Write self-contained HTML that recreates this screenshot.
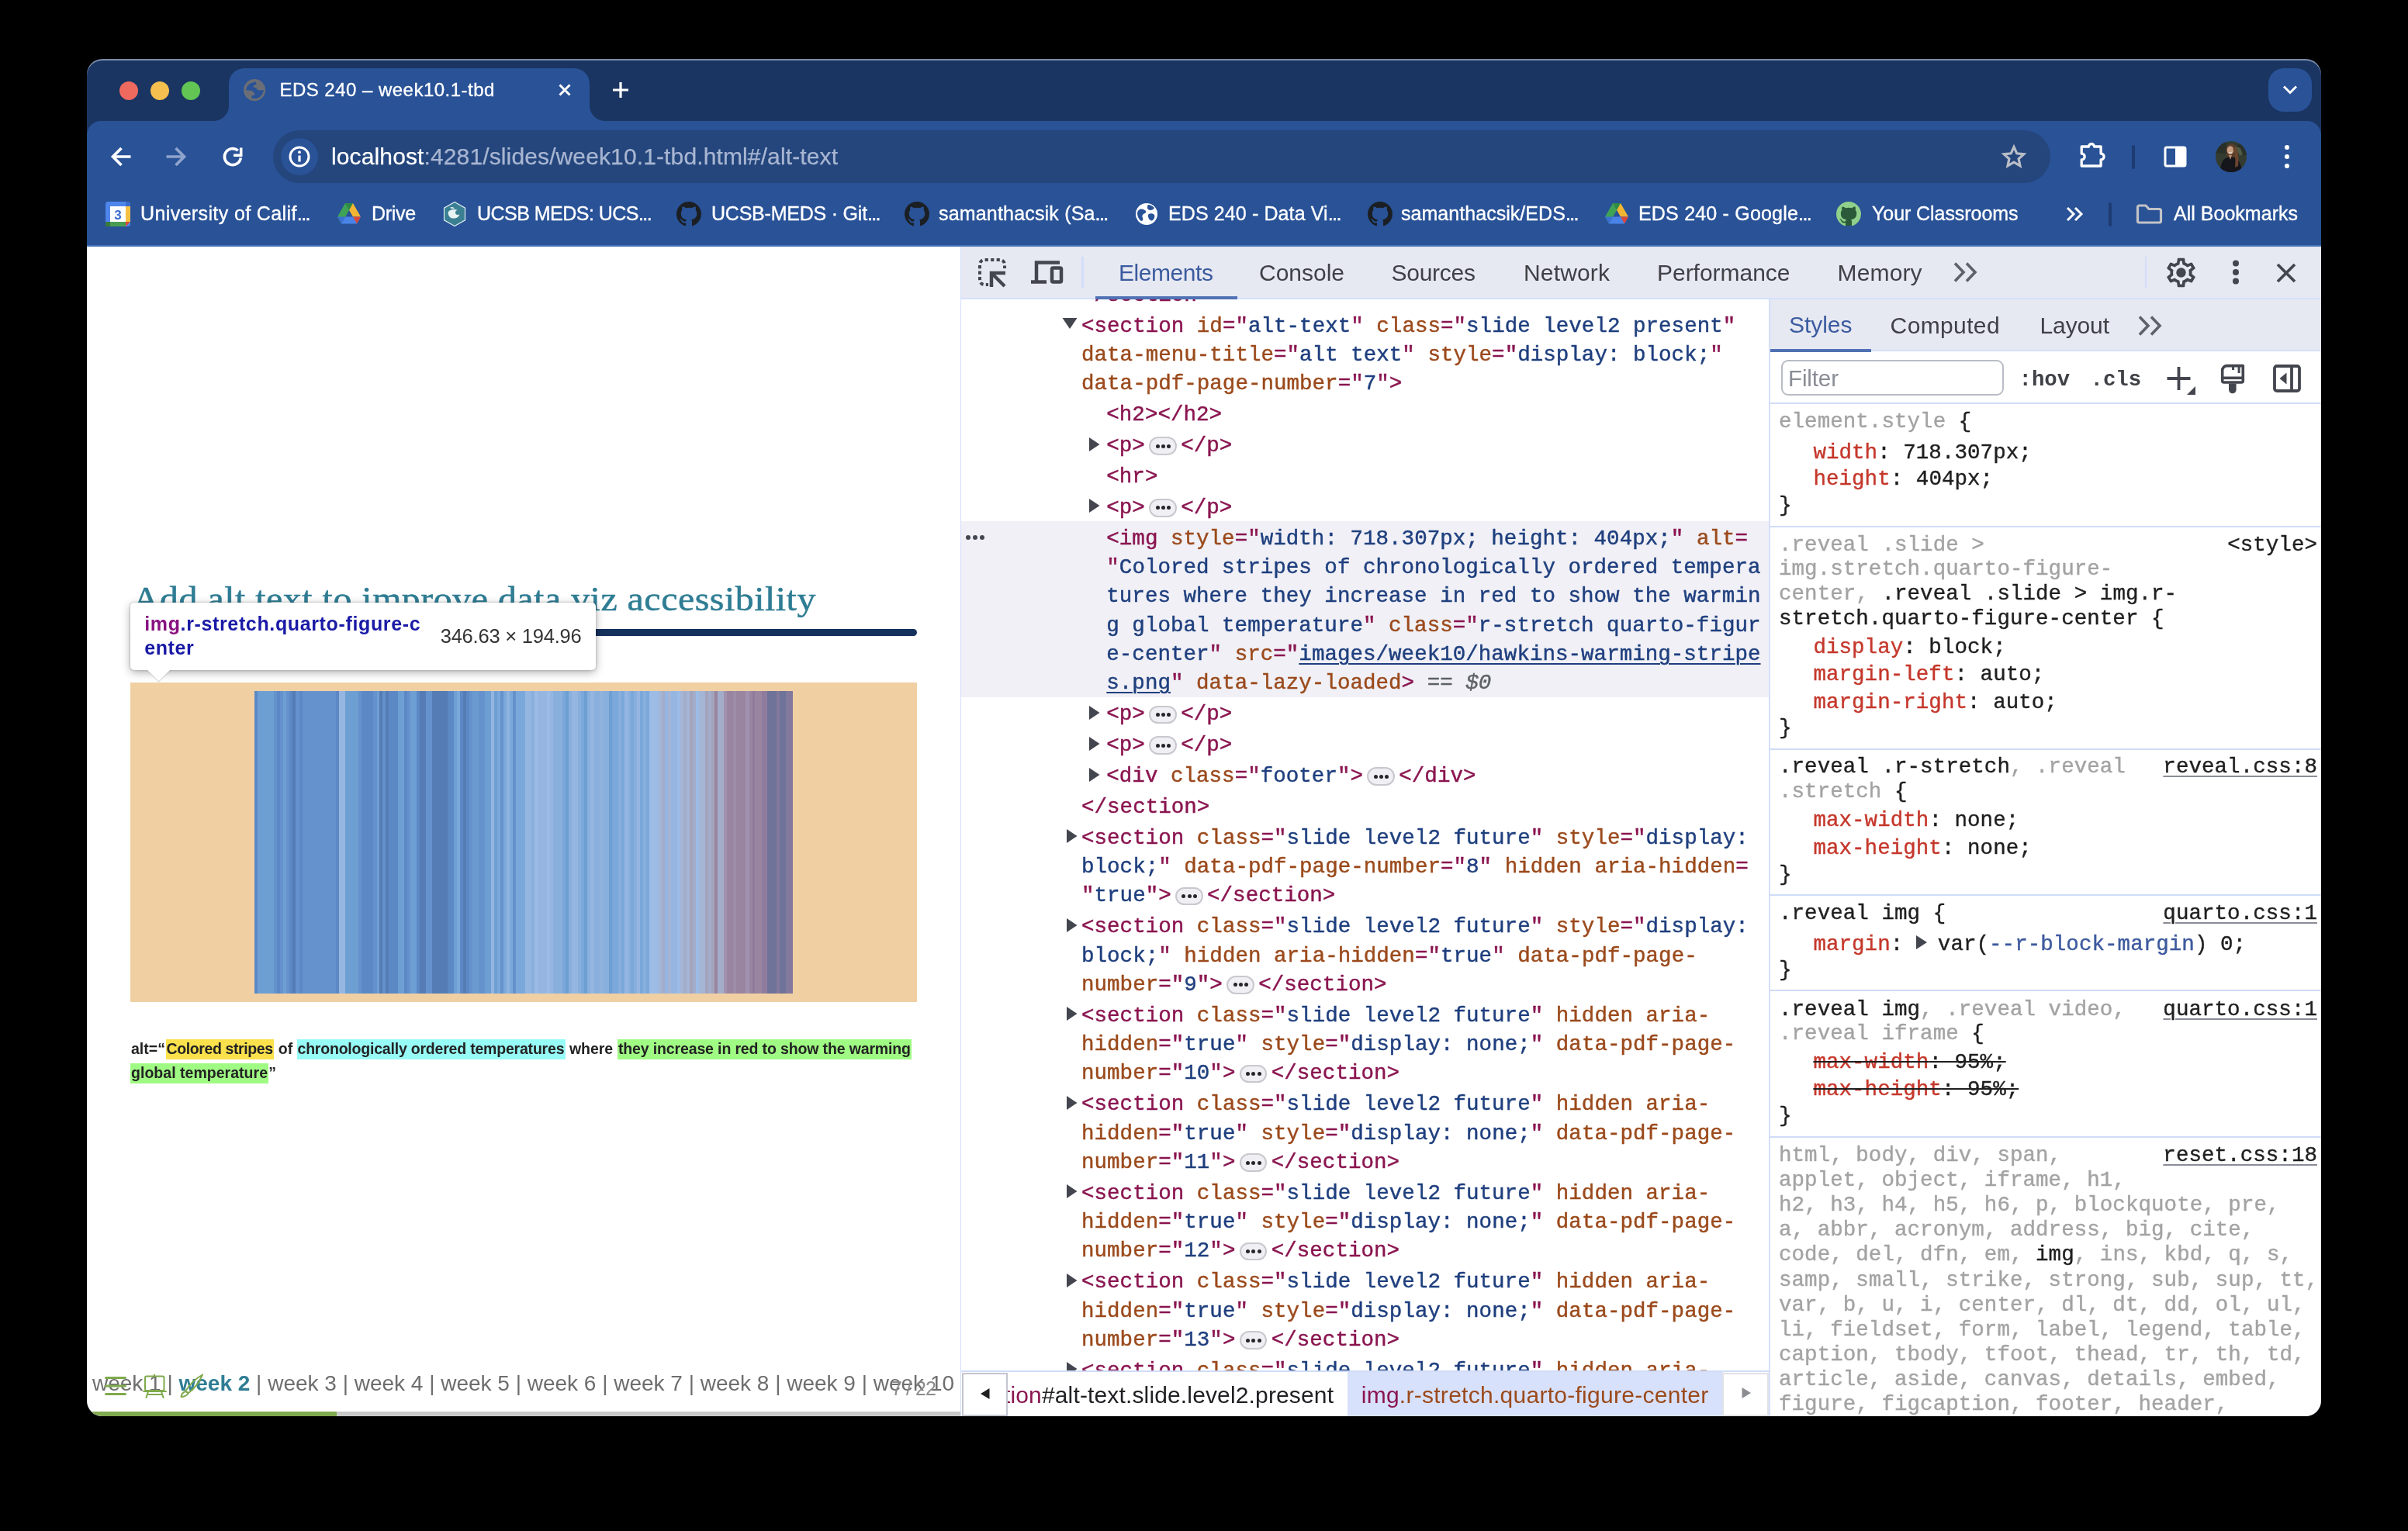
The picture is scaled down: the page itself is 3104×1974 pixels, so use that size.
<!DOCTYPE html>
<html><head>
<meta charset="utf-8">
<title>EDS 240 – week10.1-tbd</title>
<style>
*{box-sizing:border-box;margin:0;padding:0}
html,body{width:3104px;height:1974px;background:#000;overflow:hidden}
body{position:relative;font-family:"Liberation Sans",sans-serif;}
.abs{position:absolute}
#win{will-change:transform;position:absolute;left:112px;top:76px;width:2880px;height:1750px;border-radius:20px;overflow:hidden;background:#1a3561;box-shadow:inset 0 2px 0 0 rgba(200,210,230,.55)}
#win>*{position:absolute}
/* inside #win coordinates are offset by (-112,-76); use wrapper with translate for convenience */
#w{position:absolute;left:-112px;top:-76px;width:3104px;height:1974px}
#w>*{position:absolute}
.t{white-space:nowrap;line-height:1}
/* chrome top */
#toolbar{left:112px;top:156px;width:2880px;height:162px;background:#295297;border-radius:18px 18px 0 0}
#tab{left:295px;top:88px;width:465px;height:68px;background:#295297;border-radius:20px 20px 0 0}
.tabcurve{width:20px;height:20px;top:136px;background:radial-gradient(circle at 0 0,rgba(0,0,0,0) 19.5px,#295297 20.5px)}
#urlbar{left:352px;top:168px;width:2291px;height:68px;border-radius:34px;background:#24467c}
.wt{color:#fff}
.bm{font-size:25px;line-height:30px;color:#fff;top:259.8px;-webkit-text-stroke:.35px #fff}
.el{letter-spacing:-1.6px}
/* page */
#page{left:112px;top:318px;width:1126px;height:1508px;background:#fff}
/* devtools */
#dt{left:1238px;top:318px;width:1754px;height:1508px;background:#fff}
#dtbar{left:1238px;top:318px;width:1754px;height:68px;background:#e6e8f2;border-bottom:2px solid #d5e0fb}
.dtab{font-size:30px;color:#3f4147;top:337px}
.ap{font-size:19.5px;line-height:24px;font-weight:bold;color:#222;top:1340.3px}

#tree{left:1238px;top:386px;width:1042px;height:1381px;overflow:hidden;background:#fff}
#treein{position:absolute;left:0;top:-27.8px;width:1042px}
.nd{position:relative;padding:1.25px 0;font-family:"Liberation Mono",monospace;font-size:27.5px;letter-spacing:.03px;line-height:37.35px;white-space:pre;color:#202124;-webkit-text-stroke:.45px}
.nd.sel{background:#f0f0f6}
.l{position:relative;height:37.35px;top:2.5px}
.tg{color:#8a1550}.an{color:#9b4a1c}.av{color:#1f3f7e}.lk{text-decoration:underline;text-decoration-thickness:2px;text-underline-offset:4px}
.eq{color:#5f6368}.d0{color:#5f6368;font-style:italic}
.ell{display:inline-block;vertical-align:middle;width:35.5px;height:23.5px;margin:-3px 5.4px 0 5.4px;top:1.8px;border:2px solid #c8c8cf;border-radius:12px;background:#efeff4;position:relative}
.ell i,.dots3 i{position:absolute;width:5px;height:5px;border-radius:50%;background:#25262a;top:7.3px}
.ell i:nth-child(1){left:6.3px}.ell i:nth-child(2){left:13.5px}.ell i:nth-child(3){left:20.7px}
.dots3{position:absolute;left:6px;top:0;width:30px;height:37px}
.dots3 i{top:17.6px;width:6px;height:6px;background:#44464f}
.dots3 i:nth-child(1){left:1px}.dots3 i:nth-child(2){left:10px}.dots3 i:nth-child(3){left:19px}
.tri{position:absolute;top:6.6px;margin-left:-20px}
.tri.trb{margin-left:-23px}
.tri.trd{top:7px;margin-left:-25.5px}
#sty{left:2281px;top:0;width:711px;height:1826px;overflow:hidden}
.sl{position:absolute;font-family:"Liberation Mono",monospace;font-size:27.5px;letter-spacing:.05px;-webkit-text-stroke:.4px;line-height:37px;height:37px;white-space:pre;color:#1f1f1f}
.gr{color:#a3a3a3}.pn{color:#c5382c}.vr{color:#3d5a9e}
.st{text-decoration:line-through;text-decoration-thickness:2px;text-decoration-color:#1f1f1f}
.src.u{text-decoration:underline;text-decoration-thickness:2px;text-underline-offset:4px;text-decoration-color:#8a8d95}
.sep{position:absolute;left:0;width:711px;height:2px;background:#d0dcf7}
.vt{vertical-align:middle;margin:-4px 12px 0 -2px}
.mono{font-family:"Liberation Mono",monospace}
</style>
</head>
<body>
<div id="win"><div id="w">
<!-- tab strip -->
<div id="toolbar"></div>
<div id="tab"></div>
<div class="tabcurve" style="left:275px"></div>
<div class="tabcurve" style="left:760px;background:radial-gradient(circle at 100% 0,rgba(0,0,0,0) 19.5px,#295297 20.5px)"></div>
<div style="left:154px;top:105px;width:24px;height:24px;border-radius:50%;background:#ee6a5f"></div>
<div style="left:194px;top:105px;width:24px;height:24px;border-radius:50%;background:#f5bf4f"></div>
<div style="left:234px;top:105px;width:24px;height:24px;border-radius:50%;background:#62c554"></div>
<svg style="left:313.9px;top:101.8px" width="28.2" height="28.2" viewBox="0 0 28.2 28.2"><circle cx="14.1" cy="14.1" r="14.1" fill="#6b6e76"></circle><path d="M3.9 14.0 L5.0 9.8 L8.7 6.1 L15.4 4.0 L15.8 6.1 L13.0 7.5 L11.6 10.0 L14.5 11.6 L16.9 13.1 L17.9 15.6 L19.9 14.8 L22.8 15.2 L25.3 14.6 L24.1 18.1 L21.2 22.3 L17.0 24.3 L11.2 24.5 L11.0 21.8 L14.1 21.4 L15.2 18.9 L13.7 16.9 L10.4 14.1 L7.1 13.8z" fill="#295297" stroke="#295297" stroke-width="1.2" stroke-linejoin="round"></path></svg>
<div class="t wt" style="left: 360.4px; top: 102px; font-size: 24px; line-height: 28px; -webkit-text-stroke: 0.3px rgb(255, 255, 255); letter-spacing: 0.484px;">EDS 240 – week10.1-tbd</div>
<svg style="left:718px;top:106px" width="20" height="20" viewBox="0 0 20 20"><path d="M3.5 3.5l13 13M16.5 3.5l-13 13" stroke="#fff" stroke-width="3" fill="none"></path></svg>
<svg style="left:788px;top:104px" width="24" height="24" viewBox="0 0 24 24"><path d="M12 2v20M2 12h20" stroke="#fff" stroke-width="3.2" fill="none"></path></svg>
<div style="left:2924px;top:88px;width:56px;height:56px;border-radius:20px;background:#295297"></div>
<svg style="left:2940px;top:106px" width="24" height="20" viewBox="0 0 24 20"><path d="M4 5.5l8 8 8-8" stroke="#fff" stroke-width="3" fill="none"></path></svg>
<!-- nav buttons -->
<svg style="left:140px;top:186px" width="32" height="32" viewBox="0 0 32 32"><path d="M28.5 16H6.5M16.5 5L5.5 16 16.5 27" stroke="#fff" stroke-width="3.7" fill="none"></path></svg>
<svg style="left:211px;top:186px" width="32" height="32" viewBox="0 0 32 32"><path d="M3.5 16h22M15.5 5L26.5 16 15.5 27" stroke="#8fa4cc" stroke-width="3.7" fill="none"></path></svg>
<svg style="left:284px;top:186px" width="32" height="32" viewBox="0 0 32 32"><path d="M26.3 17.5a10.5 10.5 0 1 1-3.5-9.3" stroke="#fff" stroke-width="3.6" fill="none"></path><path d="M26.7 4.5v9.7h-9.7" stroke="#fff" stroke-width="3.6" fill="none"></path></svg>
<div id="urlbar"></div>
<div style="left:362px;top:178px;width:48px;height:48px;border-radius:50%;background:#295297"></div>
<svg style="left:370px;top:186px" width="32" height="32" viewBox="0 0 32 32"><circle cx="16" cy="16" r="12" stroke="#fff" stroke-width="3" fill="none"></circle><path d="M16 14.5v8" stroke="#fff" stroke-width="3.2"></path><circle cx="16" cy="10.2" r="1.9" fill="#fff"></circle></svg>
<div class="t" style="left: 427px; top: 185.2px; font-size: 30px; line-height: 34px; color: rgb(255, 255, 255); -webkit-text-stroke: 0.25px rgb(255, 255, 255); letter-spacing: 0.124px;">localhost<span style="color:#a9b6d2;-webkit-text-stroke:.25px #a9b6d2">:4281/slides/week10.1-tbd.html#/alt-text</span></div>
<!-- right toolbar icons -->
<svg style="left:2578px;top:184px" width="36" height="36" viewBox="0 0 36 36"><path d="M18 5.5l3.8 8.3 9 1-6.7 6.1 1.9 8.9-8-4.6-8 4.6 1.9-8.9-6.7-6.1 9-1z" stroke="#b9bdc7" stroke-width="3.2" fill="none" stroke-linejoin="miter"></path></svg>
<svg style="left:2678px;top:182px" width="40" height="40" viewBox="0 0 40 40"><path d="M5.2 7H14.5A3.5 3.5 0 0 1 21.5 7H30.1V16A4 4 0 0 1 30.1 24V32H5.2V24A4 4 0 0 0 5.2 16z" stroke="#fff" stroke-width="3.3" fill="none" stroke-linejoin="round"></path></svg>
<div style="left:2748.2px;top:186.5px;width:3.6px;height:31px;background:#1e3b72;border-radius:2px"></div>
<svg style="left:2786px;top:184px" width="36" height="36" viewBox="0 0 36 36"><rect x="5" y="6" width="26" height="24" rx="2" stroke="#fff" stroke-width="3" fill="none"></rect><rect x="18" y="6" width="13" height="24" fill="#fff"></rect></svg>
<svg style="left:2855.5px;top:182px" width="40" height="40" viewBox="0 0 40 40"><defs><clipPath id="av"><circle cx="20" cy="20" r="20"></circle></clipPath></defs><g clip-path="url(#av)"><rect width="40" height="40" fill="#343c31"></rect><path d="M0 0h14v16H0zM28 4h12v14H28z" fill="#2a3027"></path><path d="M24 6l8 3 3 8-4 2z" fill="#4d5a44"></path><path d="M14 8c1-5 10-6 12-1 3 5 4 14 3 25l-5 3-3-14-5 1c-2-4-3-9-2-14z" fill="#5b3d2b"></path><ellipse cx="19" cy="11.5" rx="4.3" ry="5.3" fill="#c79f84"></ellipse><path d="M17 14.5c1 1 3 1 4 0" stroke="#f3e7df" stroke-width="1.2" fill="none"></path><path d="M6 40c0-10 3-17 9-19l4-1 5 1c6 2 9 9 10 19z" fill="#14161b"></path><path d="M17 18l2 6 2-6z" fill="#b98f74"></path><path d="M22 10c3 4 4 12 3 24l4-2c1-10 0-19-3-25z" fill="#6a452e"></path></g></svg>
<svg style="left:2940px;top:184px" width="16" height="36" viewBox="0 0 16 36"><circle cx="8" cy="6" r="3" fill="#fff"></circle><circle cx="8" cy="18" r="3" fill="#fff"></circle><circle cx="8" cy="30" r="3" fill="#fff"></circle></svg>
<!-- bookmarks -->
<svg style="left:136px;top:260px" width="32" height="32" viewBox="0 0 32 32"><rect x="0" y="0" width="32" height="32" rx="3" fill="#4f86ec"></rect><rect x="26" y="6" width="6" height="20" fill="#f6c142"></rect><rect x="0" y="26" width="26" height="6" fill="#4a9e53"></rect><path d="M26 26h6l-6 6z" fill="#d9483b"></path><rect x="0" y="26" width="6" height="6" fill="#387a3d"></rect><rect x="26" y="0" width="6" height="6" rx="2" fill="#3c6bd0"></rect><rect x="6" y="6" width="20" height="20" fill="#fff"></rect><text x="16" y="22.5" font-family="Liberation Sans" font-size="17" font-weight="bold" fill="#3c6bd0" text-anchor="middle">3</text></svg>
<div class="t bm" style="left: 181px; letter-spacing: 0.383px;">University of Calif<span class="el">...</span></div>
<svg style="left:435px;top:262px" width="30" height="27" viewBox="0 0 30 27"><path d="M10 0h10l10 17.5H20z" fill="#f2b632"></path><path d="M10 0L0 17.5l5 9L15 9z" fill="#3fa356"></path><path d="M5 26.5h20l5-9H10z" fill="#4a83e8"></path><path d="M20 17.5h10l-5 9z" fill="#d9483b"></path><path d="M10 0h10l-5 9z" fill="#2e8b45"></path><path d="M0 17.5h10l-5 9z" fill="#3b6fd4"></path></svg>
<div class="t bm" style="left: 479px; letter-spacing: -0.286px;">Drive</div>
<svg style="left:570px;top:260px" width="32" height="32" viewBox="0 0 32 32"><path d="M16 0.5l13.5 7.7v15.6L16 31.5 2.5 23.8V8.2z" fill="#3b7f93" stroke="#dfeef0" stroke-width="1.2"></path><path d="M8 13c2-3 8-4 12-2 3 2 3 7 0 9s-8 2-10 0-3-5-2-7z" fill="#e8f2f2"></path><circle cx="20" cy="14" r="3" fill="#3b7f93"></circle><path d="M10 8c2-2 5-1 6 1-2 0-4 0-6-1z" fill="#e8f2f2"></path></svg>
<div class="t bm" style="left: 615px; letter-spacing: -0.522px;">UCSB MEDS: UCS<span class="el">...</span></div>
<svg class="gh" style="left:872px;top:260px" width="32" height="32" viewBox="0 0 16 16"><path fill="#1b1f23" d="M8 0C3.58 0 0 3.58 0 8c0 3.54 2.29 6.53 5.47 7.59.4.07.55-.17.55-.38 0-.19-.01-.82-.01-1.49-2.01.37-2.53-.49-2.69-.94-.09-.23-.48-.94-.82-1.13-.28-.15-.68-.52-.01-.53.63-.01 1.08.58 1.23.82.72 1.21 1.87.87 2.33.66.07-.52.28-.87.51-1.07-1.78-.2-3.64-.89-3.64-3.95 0-.87.31-1.59.82-2.15-.08-.2-.36-1.02.08-2.12 0 0 .67-.21 2.2.82.64-.18 1.32-.27 2-.27s1.36.09 2 .27c1.53-1.04 2.2-.82 2.2-.82.44 1.1.16 1.92.08 2.12.51.56.82 1.27.82 2.15 0 3.07-1.87 3.75-3.65 3.95.29.25.54.73.54 1.48 0 1.07-.01 1.93-.01 2.2 0 .21.15.46.55.38A8.01 8.01 0 0 0 16 8c0-4.42-3.58-8-8-8z"></path></svg>
<div class="t bm" style="left: 917px; letter-spacing: -0.22px;">UCSB-MEDS · Git<span class="el">...</span></div>
<svg style="left:1166px;top:260px" width="32" height="32" viewBox="0 0 16 16"><path fill="#1b1f23" d="M8 0C3.58 0 0 3.58 0 8c0 3.54 2.29 6.53 5.47 7.59.4.07.55-.17.55-.38 0-.19-.01-.82-.01-1.49-2.01.37-2.53-.49-2.69-.94-.09-.23-.48-.94-.82-1.13-.28-.15-.68-.52-.01-.53.63-.01 1.08.58 1.23.82.72 1.21 1.87.87 2.33.66.07-.52.28-.87.51-1.07-1.78-.2-3.64-.89-3.64-3.95 0-.87.31-1.59.82-2.15-.08-.2-.36-1.02.08-2.12 0 0 .67-.21 2.2.82.64-.18 1.32-.27 2-.27s1.36.09 2 .27c1.53-1.04 2.2-.82 2.2-.82.44 1.1.16 1.92.08 2.12.51.56.82 1.27.82 2.15 0 3.07-1.87 3.75-3.65 3.95.29.25.54.73.54 1.48 0 1.07-.01 1.93-.01 2.2 0 .21.15.46.55.38A8.01 8.01 0 0 0 16 8c0-4.42-3.58-8-8-8z"></path></svg>
<div class="t bm" style="left: 1210px; letter-spacing: 0.181px;">samanthacsik (Sa<span class="el">...</span></div>
<svg style="left:1463px;top:261px" width="30" height="30" viewBox="0 0 30 30"><circle cx="15" cy="15" r="14" fill="#fff"></circle><path d="M6 9c3-1 6 0 8 2 1 2-1 3-3 4s-2 3-1 5c1 2 0 4-2 4-3-2-5-6-5-10 0-2 1-4 3-5zM17 3c3 0 6 2 8 4-1 2-3 3-5 3s-4-1-4-3 0-3 1-4zM18 15c2-1 5-1 7 1 1 2 0 5-2 7-2 1-4 0-5-2s-2-5 0-6z" fill="#295297"></path></svg>
<div class="t bm" style="left: 1506px; letter-spacing: 0.113px;">EDS 240 - Data Vi<span class="el">...</span></div>
<svg style="left:1763px;top:260px" width="32" height="32" viewBox="0 0 16 16"><path fill="#1b1f23" d="M8 0C3.58 0 0 3.58 0 8c0 3.54 2.29 6.53 5.47 7.59.4.07.55-.17.55-.38 0-.19-.01-.82-.01-1.49-2.01.37-2.53-.49-2.69-.94-.09-.23-.48-.94-.82-1.13-.28-.15-.68-.52-.01-.53.63-.01 1.08.58 1.23.82.72 1.21 1.87.87 2.33.66.07-.52.28-.87.51-1.07-1.78-.2-3.64-.89-3.64-3.95 0-.87.31-1.59.82-2.15-.08-.2-.36-1.02.08-2.12 0 0 .67-.21 2.2.82.64-.18 1.32-.27 2-.27s1.36.09 2 .27c1.53-1.04 2.2-.82 2.2-.82.44 1.1.16 1.92.08 2.12.51.56.82 1.27.82 2.15 0 3.07-1.87 3.75-3.65 3.95.29.25.54.73.54 1.48 0 1.07-.01 1.93-.01 2.2 0 .21.15.46.55.38A8.01 8.01 0 0 0 16 8c0-4.42-3.58-8-8-8z"></path></svg>
<div class="t bm" style="left: 1806px; letter-spacing: 0.042px;">samanthacsik/EDS<span class="el">...</span></div>
<svg style="left:2069px;top:262px" width="30" height="27" viewBox="0 0 30 27"><path d="M10 0h10l10 17.5H20z" fill="#f2b632"></path><path d="M10 0L0 17.5l5 9L15 9z" fill="#3fa356"></path><path d="M5 26.5h20l5-9H10z" fill="#4a83e8"></path><path d="M20 17.5h10l-5 9z" fill="#d9483b"></path><path d="M10 0h10l-5 9z" fill="#2e8b45"></path><path d="M0 17.5h10l-5 9z" fill="#3b6fd4"></path></svg>
<div class="t bm" style="left: 2112px; letter-spacing: 0.197px;">EDS 240 - Google<span class="el">...</span></div>
<svg style="left:2367px;top:260px" width="32" height="32" viewBox="0 0 16 16"><circle cx="8" cy="8" r="7.6" fill="#2b5a3a"></circle><path fill="#8fd18a" d="M8 0C3.58 0 0 3.58 0 8c0 3.54 2.29 6.53 5.47 7.59.4.07.55-.17.55-.38 0-.19-.01-.82-.01-1.49-2.01.37-2.53-.49-2.69-.94-.09-.23-.48-.94-.82-1.13-.28-.15-.68-.52-.01-.53.63-.01 1.08.58 1.23.82.72 1.21 1.87.87 2.33.66.07-.52.28-.87.51-1.07-1.78-.2-3.64-.89-3.64-3.95 0-.87.31-1.59.82-2.15-.08-.2-.36-1.02.08-2.12 0 0 .67-.21 2.2.82.64-.18 1.32-.27 2-.27s1.36.09 2 .27c1.53-1.04 2.2-.82 2.2-.82.44 1.1.16 1.92.08 2.12.51.56.82 1.27.82 2.15 0 3.07-1.87 3.75-3.65 3.95.29.25.54.73.54 1.48 0 1.07-.01 1.93-.01 2.2 0 .21.15.46.55.38A8.01 8.01 0 0 0 16 8c0-4.42-3.58-8-8-8z"></path></svg>
<div class="t bm" style="left: 2413px; letter-spacing: -0.067px;">Your Classrooms</div>
<svg style="left:2662px;top:266px" width="24" height="20" viewBox="0 0 24 20"><path d="M3 2l8 8-8 8M13 2l8 8-8 8" stroke="#fff" stroke-width="3" fill="none"></path></svg>
<div style="left:2718.2px;top:260.5px;width:3.6px;height:31px;background:#1e3b72;border-radius:2px"></div>
<svg style="left:2752px;top:262px" width="36" height="28" viewBox="0 0 36 28"><path d="M3.5 5a2 2 0 0 1 2-2h8.5l4 4.5h13.5a2 2 0 0 1 2 2V23a2 2 0 0 1-2 2h-26a2 2 0 0 1-2-2z" stroke="#c2c2c6" stroke-width="3.2" fill="none" stroke-linejoin="round"></path></svg>
<div class="t bm" style="left: 2802px; letter-spacing: 0.02px;">All Bookmarks</div>
<div style="left:112px;top:316px;width:2880px;height:2px;background:#4873b8"></div>


<div id="page"></div>
<div class="t" style="left:170.5px;top:746px;font-family:'Liberation Serif',serif;font-size:43.5px;line-height:52px;color:#2f7d94;-webkit-text-stroke:.5px #2f7d94;transform:scaleX(1.1);transform-origin:0 0;letter-spacing:.47px">Add alt text to improve data viz accessibility</div>
<div style="left:168px;top:811px;width:1013.5px;height:8.5px;border-radius:5px;background:#14315c"></div>
<div style="left:168px;top:880px;width:1013.5px;height:411.5px;background:#f0cfa3"></div>
<div style="left:328px;top:891px;width:693.8px;height:390px;background:linear-gradient(90deg,#5C88C5 0.1px 4.2px,#6E9FD3 4.2px 24.8px,#6592CC 24.8px 28.9px,#5C88C5 28.9px 33.0px,#6592CC 33.0px 37.1px,#6E9FD3 37.1px 41.2px,#6592CC 41.2px 45.3px,#5C88C5 45.3px 49.4px,#557CB4 49.4px 53.5px,#6592CC 53.5px 57.6px,#5C88C5 57.6px 61.8px,#6592CC 61.8px 104.9px,#5C88C5 104.9px 109.0px,#95B6E1 109.0px 117.2px,#6E9FD3 117.2px 133.7px,#6592CC 133.7px 137.8px,#5C88C5 137.8px 153.5px,#6592CC 153.5px 157.6px,#6E9FD3 157.6px 160.9px,#557CB4 160.9px 165.0px,#6390CA 165.0px 169.2px,#557CB4 169.2px 173.1px,#5C88C5 173.1px 184.7px,#6E9FD3 184.7px 192.9px,#5C88C5 192.9px 197.0px,#6592CC 197.0px 201.1px,#6E9FD3 201.1px 209.0px,#5C88C5 209.0px 213.1px,#557CB4 213.1px 221.0px,#6592CC 221.0px 229.2px,#557CB4 229.2px 248.6px,#5C88C5 248.6px 256.8px,#6E9FD3 256.8px 260.9px,#7BA8DA 260.9px 265.0px,#5C88C5 265.0px 269.2px,#557CB4 269.2px 272.9px,#5C88C5 272.9px 277.0px,#6592CC 277.0px 281.1px,#6B9AD0 281.1px 289.0px,#6592CC 289.0px 297.2px,#6E9FD3 297.2px 305.0px,#95B6E1 305.0px 308.8px,#6E9FD3 308.8px 312.9px,#7BA8DA 312.9px 317.0px,#6592CC 317.0px 321.1px,#7BA8DA 321.1px 324.8px,#90B3DE 324.8px 329.0px,#7BA8DA 329.0px 332.7px,#6592CC 332.7px 336.8px,#7BA8DA 336.8px 349.1px,#95B6E1 349.1px 357.2px,#89AFDC 357.2px 360.9px,#9CBCE5 360.9px 365.4px,#95B6E1 365.4px 377.0px,#9CBCE5 377.0px 381.1px,#95B6E1 381.1px 385.2px,#89AFDC 385.2px 397.2px,#7BA8DA 397.2px 401.3px,#6E9FD3 401.3px 405.0px,#89AFDC 405.0px 409.2px,#95B6E1 409.2px 417.0px,#89AFDC 417.0px 421.1px,#7BA8DA 421.1px 425.2px,#6E9FD3 425.2px 429.0px,#89AFDC 429.0px 433.1px,#95B6E1 433.1px 437.9px,#89AFDC 437.9px 444.7px,#90B3DE 444.7px 449.1px,#89AFDC 449.1px 457.0px,#6E9FD3 457.0px 460.7px,#7BA8DA 460.7px 468.9px,#89AFDC 468.9px 473.1px,#7BA8DA 473.1px 477.2px,#95B6E1 477.2px 481.6px,#89AFDC 481.6px 485.0px,#7BA8DA 485.0px 489.1px,#89AFDC 489.1px 492.9px,#95B6E1 492.9px 497.0px,#7BA8DA 497.0px 501.1px,#89AFDC 501.1px 505.2px,#7BA8DA 505.2px 509.3px,#9CBCE5 509.3px 521.1px,#A4B5D6 521.1px 525.1px,#A3ADCA 525.1px 529.2px,#95B6E1 529.2px 533.3px,#A4B5D6 533.3px 537.1px,#95B6E1 537.1px 544.9px,#9CBCE5 544.9px 549.4px,#A4B5D6 549.4px 553.1px,#A3ADCA 553.1px 556.9px,#A4B5D6 556.9px 561.3px,#A3A3BC 561.3px 565.1px,#A3ADCA 565.1px 569.2px,#9CBCE5 569.2px 573.3px,#A4B5D6 573.3px 581.2px,#A3A3BC 581.2px 585.3px,#A3ADCA 585.3px 589.0px,#A3A3BC 589.0px 593.1px,#9A85A0 593.1px 597.2px,#A3ADCA 597.2px 605.1px,#A092AF 605.1px 609.2px,#9A85A0 609.2px 616.7px,#9E8DA8 616.7px 621.5px,#9A85A0 621.5px 632.7px,#A092AF 632.7px 637.6px,#9A85A0 637.6px 642.1px,#8F7C9D 642.1px 645.1px,#9A85A0 645.1px 653.7px,#8F7C9D 653.7px 661.1px,#6F7299 661.1px 672.7px,#83799C 672.7px 677.2px,#6F7299 677.2px 685.4px,#83799C 685.4px 693.8px)"></div>
<!-- tooltip -->
<div style="left:168.3px;top:777px;width:599.6px;height:86.5px;background:#fff;border-radius:5px;box-shadow:0 3px 12px rgba(0,0,0,.32),0 0 3px rgba(0,0,0,.25)"></div>
<svg style="left:184px;top:862px" width="42" height="20" viewBox="0 0 42 20"><path d="M5 1.5L20.5 17 36 1.5z" fill="#fff"></path><path d="M5 1.5L20.5 17 36 1.5" fill="none" stroke="rgba(0,0,0,.12)" stroke-width="1.5"></path></svg>
<div class="t" style="left: 186.2px; top: 789px; font-size: 25px; line-height: 30px; font-weight: bold; color: rgb(26, 26, 166); letter-spacing: 0.638px;"><span style="color:#881280">img</span>.r-stretch.quarto-figure-c</div>
<div class="t" style="left: 186.2px; top: 820.2px; font-size: 25px; line-height: 30px; font-weight: bold; color: rgb(26, 26, 166); letter-spacing: 0.59px;">enter</div>
<div class="t" style="left: 567.7px; top: 804.8px; font-size: 25.5px; line-height: 30px; color: rgb(51, 51, 51); letter-spacing: -0.219px;">346.63 × 194.96</div>
<!-- alt paragraph -->
<div style="left:213.6px;top:1340px;width:139.5px;height:25.7px;background:#fbe24c"></div>
<div style="left:382.5px;top:1340px;width:346.1px;height:25.7px;background:#97fbf6"></div>
<div style="left:796px;top:1340px;width:379px;height:25.7px;background:#9ffb83"></div>
<div style="left:168px;top:1371px;width:178.1px;height:25.7px;background:#9ffb83"></div>
<div class="t ap" style="left: 169px; letter-spacing: 0.023px;">alt=“</div>
<div class="t ap" style="left: 214.6px; letter-spacing: -0.396px;">Colored stripes</div>
<div class="t ap" style="left: 358.8px; letter-spacing: 0.094px;">of</div>
<div class="t ap" style="left: 383.5px; letter-spacing: -0.203px;">chronologically ordered temperatures</div>
<div class="t ap" style="left: 734px; letter-spacing: -0.09px;">where</div>
<div class="t ap" style="left: 797px; letter-spacing: -0.141px;">they increase in red to show the warming</div>
<div class="t ap" style="left: 169px; top: 1371.3px; letter-spacing: 0.027px;">global temperature</div>
<div class="t ap" style="left:346.3px;top:1371.3px">”</div>
<!-- footer -->
<div class="t" style="left: 119px; top: 1768px; font-size: 28px; line-height: 32px; color: rgb(110, 110, 110); letter-spacing: -0.004px;">week 1 | <b style="color:#2f7d94">week 2</b> | week 3 | week 4 | week 5 | week 6 | week 7 | week 8 | week 9 | week 10</div>
<div class="t" style="left: 1149px; top: 1776px; font-size: 25px; line-height: 28px; color: rgb(140, 140, 140); letter-spacing: -0.912px;">7 / 22</div>
<svg style="left:130px;top:1768px" width="140" height="40" viewBox="0 0 140 40" fill="none" stroke="#7faa4c" stroke-width="3" stroke-linecap="round" stroke-linejoin="round"><path d="M6.5 8.5h25M6.5 19h25M6.5 29.500h25"></path><g stroke-width="2"><rect x="57" y="6.500" width="24.500" height="18.500" rx="2"></rect><path d="M55 26h29M61 26l-2.500 8M78 26l2.500 8M60 30h19M69 6.500V4.500"></path><path d="M131 4.500c-9 5-17 13-22 21.500l4 2c8-6 14-14 18-23.500zM109 26c-3 1-5 3.500-5.500 7 3.500 0 7-1 9.500-5"></path></g></svg>
<div style="left:112px;top:1819.7px;width:1126px;height:6.5px;background:#c9c9c9"></div>
<div style="left:112px;top:1819.7px;width:322px;height:6.5px;background:#82aa50"></div>


<div id="dt"></div>
<div id="tree"><div id="treein"><div class="nd"><div class="l" style="padding-left:156.0px"><span class="tg">&lt;/section&gt;</span></div></div><div class="nd"><div class="l" style="padding-left:156.0px"><svg class="tri trd" width="20" height="16" viewBox="0 0 20 16"><path d="M0.5 1h19L10 15z" fill="#44464f"></path></svg><span class="tg">&lt;section</span> <span class="an">id</span><span class="tg">="</span><span class="av">alt-text</span><span class="tg">"</span> <span class="an">class</span><span class="tg">="</span><span class="av">slide level2 present</span><span class="tg">"</span></div><div class="l" style="padding-left:156.0px"><span class="an">data-menu-title</span><span class="tg">="</span><span class="av">alt text</span><span class="tg">"</span> <span class="an">style</span><span class="tg">="</span><span class="av">display: block;</span><span class="tg">"</span></div><div class="l" style="padding-left:156.0px"><span class="an">data-pdf-page-number</span><span class="tg">="</span><span class="av">7</span><span class="tg">"&gt;</span></div></div><div class="nd"><div class="l" style="padding-left:188.3px"><span class="tg">&lt;h2&gt;&lt;/h2&gt;</span></div></div><div class="nd"><div class="l" style="padding-left:188.3px"><svg class="tri trb" width="16" height="20" viewBox="0 0 16 20"><path d="M1 1l13.5 9L1 19z" fill="#44464f"></path></svg><span class="tg">&lt;p&gt;</span><span class="ell"><i></i><i></i><i></i></span><span class="tg">&lt;/p&gt;</span></div></div><div class="nd"><div class="l" style="padding-left:188.3px"><span class="tg">&lt;hr&gt;</span></div></div><div class="nd"><div class="l" style="padding-left:188.3px"><svg class="tri trb" width="16" height="20" viewBox="0 0 16 20"><path d="M1 1l13.5 9L1 19z" fill="#44464f"></path></svg><span class="tg">&lt;p&gt;</span><span class="ell"><i></i><i></i><i></i></span><span class="tg">&lt;/p&gt;</span></div></div><div class="nd sel"><span class="dots3"><i></i><i></i><i></i></span><div class="l" style="padding-left:188.3px"><span class="tg">&lt;img</span> <span class="an">style</span><span class="tg">="</span><span class="av">width: 718.307px; height: 404px;</span><span class="tg">"</span> <span class="an">alt</span><span class="tg">=</span></div><div class="l" style="padding-left:188.3px"><span class="tg">"</span><span class="av">Colored stripes of chronologically ordered tempera</span></div><div class="l" style="padding-left:188.3px"><span class="av">tures where they increase in red to show the warmin</span></div><div class="l" style="padding-left:188.3px"><span class="av">g global temperature</span><span class="tg">"</span> <span class="an">class</span><span class="tg">="</span><span class="av">r-stretch quarto-figur</span></div><div class="l" style="padding-left:188.3px"><span class="av">e-center</span><span class="tg">"</span> <span class="an">src</span><span class="tg">="</span><span class="av lk">images/week10/hawkins-warming-stripe</span></div><div class="l" style="padding-left:188.3px"><span class="av lk">s.png</span><span class="tg">"</span> <span class="an">data-lazy-loaded</span><span class="tg">&gt;</span><span class="eq"> == </span><span class="d0">$0</span></div></div><div class="nd"><div class="l" style="padding-left:188.3px"><svg class="tri trb" width="16" height="20" viewBox="0 0 16 20"><path d="M1 1l13.5 9L1 19z" fill="#44464f"></path></svg><span class="tg">&lt;p&gt;</span><span class="ell"><i></i><i></i><i></i></span><span class="tg">&lt;/p&gt;</span></div></div><div class="nd"><div class="l" style="padding-left:188.3px"><svg class="tri trb" width="16" height="20" viewBox="0 0 16 20"><path d="M1 1l13.5 9L1 19z" fill="#44464f"></path></svg><span class="tg">&lt;p&gt;</span><span class="ell"><i></i><i></i><i></i></span><span class="tg">&lt;/p&gt;</span></div></div><div class="nd"><div class="l" style="padding-left:188.3px"><svg class="tri trb" width="16" height="20" viewBox="0 0 16 20"><path d="M1 1l13.5 9L1 19z" fill="#44464f"></path></svg><span class="tg">&lt;div</span> <span class="an">class</span><span class="tg">="</span><span class="av">footer</span><span class="tg">"&gt;</span><span class="ell"><i></i><i></i><i></i></span><span class="tg">&lt;/div&gt;</span></div></div><div class="nd"><div class="l" style="padding-left:156.0px"><span class="tg">&lt;/section&gt;</span></div></div><div class="nd"><div class="l" style="padding-left:156.0px"><svg class="tri" width="16" height="20" viewBox="0 0 16 20"><path d="M1 1l13.5 9L1 19z" fill="#44464f"></path></svg><span class="tg">&lt;section</span> <span class="an">class</span><span class="tg">="</span><span class="av">slide level2 future</span><span class="tg">"</span> <span class="an">style</span><span class="tg">="</span><span class="av">display:</span></div><div class="l" style="padding-left:156.0px"><span class="av">block;</span><span class="tg">"</span> <span class="an">data-pdf-page-number</span><span class="tg">="</span><span class="av">8</span><span class="tg">"</span> <span class="an">hidden</span> <span class="an">aria-hidden</span><span class="tg">=</span></div><div class="l" style="padding-left:156.0px"><span class="tg">"</span><span class="av">true</span><span class="tg">"&gt;</span><span class="ell"><i></i><i></i><i></i></span><span class="tg">&lt;/section&gt;</span></div></div><div class="nd"><div class="l" style="padding-left:156.0px"><svg class="tri" width="16" height="20" viewBox="0 0 16 20"><path d="M1 1l13.5 9L1 19z" fill="#44464f"></path></svg><span class="tg">&lt;section</span> <span class="an">class</span><span class="tg">="</span><span class="av">slide level2 future</span><span class="tg">"</span> <span class="an">style</span><span class="tg">="</span><span class="av">display:</span></div><div class="l" style="padding-left:156.0px"><span class="av">block;</span><span class="tg">"</span> <span class="an">hidden</span> <span class="an">aria-hidden</span><span class="tg">="</span><span class="av">true</span><span class="tg">"</span> <span class="an">data-pdf-page-</span></div><div class="l" style="padding-left:156.0px"><span class="an">number</span><span class="tg">="</span><span class="av">9</span><span class="tg">"&gt;</span><span class="ell"><i></i><i></i><i></i></span><span class="tg">&lt;/section&gt;</span></div></div><div class="nd"><div class="l" style="padding-left:156.0px"><svg class="tri" width="16" height="20" viewBox="0 0 16 20"><path d="M1 1l13.5 9L1 19z" fill="#44464f"></path></svg><span class="tg">&lt;section</span> <span class="an">class</span><span class="tg">="</span><span class="av">slide level2 future</span><span class="tg">"</span> <span class="an">hidden</span> <span class="an">aria-</span></div><div class="l" style="padding-left:156.0px"><span class="an">hidden</span><span class="tg">="</span><span class="av">true</span><span class="tg">"</span> <span class="an">style</span><span class="tg">="</span><span class="av">display: none;</span><span class="tg">"</span> <span class="an">data-pdf-page-</span></div><div class="l" style="padding-left:156.0px"><span class="an">number</span><span class="tg">="</span><span class="av">10</span><span class="tg">"&gt;</span><span class="ell"><i></i><i></i><i></i></span><span class="tg">&lt;/section&gt;</span></div></div><div class="nd"><div class="l" style="padding-left:156.0px"><svg class="tri" width="16" height="20" viewBox="0 0 16 20"><path d="M1 1l13.5 9L1 19z" fill="#44464f"></path></svg><span class="tg">&lt;section</span> <span class="an">class</span><span class="tg">="</span><span class="av">slide level2 future</span><span class="tg">"</span> <span class="an">hidden</span> <span class="an">aria-</span></div><div class="l" style="padding-left:156.0px"><span class="an">hidden</span><span class="tg">="</span><span class="av">true</span><span class="tg">"</span> <span class="an">style</span><span class="tg">="</span><span class="av">display: none;</span><span class="tg">"</span> <span class="an">data-pdf-page-</span></div><div class="l" style="padding-left:156.0px"><span class="an">number</span><span class="tg">="</span><span class="av">11</span><span class="tg">"&gt;</span><span class="ell"><i></i><i></i><i></i></span><span class="tg">&lt;/section&gt;</span></div></div><div class="nd"><div class="l" style="padding-left:156.0px"><svg class="tri" width="16" height="20" viewBox="0 0 16 20"><path d="M1 1l13.5 9L1 19z" fill="#44464f"></path></svg><span class="tg">&lt;section</span> <span class="an">class</span><span class="tg">="</span><span class="av">slide level2 future</span><span class="tg">"</span> <span class="an">hidden</span> <span class="an">aria-</span></div><div class="l" style="padding-left:156.0px"><span class="an">hidden</span><span class="tg">="</span><span class="av">true</span><span class="tg">"</span> <span class="an">style</span><span class="tg">="</span><span class="av">display: none;</span><span class="tg">"</span> <span class="an">data-pdf-page-</span></div><div class="l" style="padding-left:156.0px"><span class="an">number</span><span class="tg">="</span><span class="av">12</span><span class="tg">"&gt;</span><span class="ell"><i></i><i></i><i></i></span><span class="tg">&lt;/section&gt;</span></div></div><div class="nd"><div class="l" style="padding-left:156.0px"><svg class="tri" width="16" height="20" viewBox="0 0 16 20"><path d="M1 1l13.5 9L1 19z" fill="#44464f"></path></svg><span class="tg">&lt;section</span> <span class="an">class</span><span class="tg">="</span><span class="av">slide level2 future</span><span class="tg">"</span> <span class="an">hidden</span> <span class="an">aria-</span></div><div class="l" style="padding-left:156.0px"><span class="an">hidden</span><span class="tg">="</span><span class="av">true</span><span class="tg">"</span> <span class="an">style</span><span class="tg">="</span><span class="av">display: none;</span><span class="tg">"</span> <span class="an">data-pdf-page-</span></div><div class="l" style="padding-left:156.0px"><span class="an">number</span><span class="tg">="</span><span class="av">13</span><span class="tg">"&gt;</span><span class="ell"><i></i><i></i><i></i></span><span class="tg">&lt;/section&gt;</span></div></div><div class="nd"><div class="l" style="padding-left:156.0px"><svg class="tri" width="16" height="20" viewBox="0 0 16 20"><path d="M1 1l13.5 9L1 19z" fill="#44464f"></path></svg><span class="tg">&lt;section</span> <span class="an">class</span><span class="tg">="</span><span class="av">slide level2 future</span><span class="tg">"</span> <span class="an">hidden</span> <span class="an">aria-</span></div></div></div></div>
<div id="dtbar"></div>
<!-- toolbar icons -->
<svg style="left:1259px;top:331px" width="40" height="40" viewBox="0 0 40 40" fill="none" stroke="#44464f" stroke-width="4"><path d="M15 36H10A6 6 0 0 1 4 30V10A6 6 0 0 1 10 4H30A6 6 0 0 1 36 10V15" stroke-dasharray="4.2 3.3" stroke-dashoffset="1"></path><path d="M37 21H19v18" stroke-width="4.5"></path><path d="M19.5 21.5L36 38" stroke-width="4.5"></path></svg>
<svg style="left:1328px;top:334px" width="44" height="34" viewBox="0 0 44 34" fill="none" stroke="#44464f" stroke-width="4.5"><path d="M8 28V4.5h30"></path><path d="M1 29.5h20"></path><rect x="28" y="11.5" width="12" height="18" rx="1.5"></rect></svg>
<div style="left:1393.5px;top:331px;width:3px;height:40px;background:#d3defa"></div>
<div class="t dtab" style="left: 1442px; color: rgb(59, 91, 159); letter-spacing: -0.438px;">Elements</div>
<div style="left:1412px;top:382px;width:183px;height:4px;background:#5071b4"></div>
<div class="t dtab" style="left: 1623px; letter-spacing: -0.013px;">Console</div>
<div class="t dtab" style="left: 1793.5px; letter-spacing: -0.26px;">Sources</div>
<div class="t dtab" style="left: 1964px; letter-spacing: 0.161px;">Network</div>
<div class="t dtab" style="left: 2136px; letter-spacing: -0.025px;">Performance</div>
<div class="t dtab" style="left: 2368.6px; letter-spacing: 0.131px;">Memory</div>
<svg style="left:2516px;top:336px" width="36" height="30" viewBox="0 0 36 30" fill="none" stroke="#5f6168" stroke-width="3.6"><path d="M4 3.5L15 15 4 26.5M19 3.5L30 15 19 26.5"></path></svg>
<div style="left:2765px;top:331px;width:2px;height:40px;background:#d3defa"></div>
<svg style="left:2789.1px;top:328.5px" width="45" height="45" viewBox="0 0 24 24"><path fill="#44464f" d="M19.430 12.980c.040-.320.070-.640.070-.980s-.030-.660-.070-.980l2.110-1.650a.5.5 0 0 0 .12-.640l-2-3.460a.5.5 0 0 0-.610-.220l-2.490 1a7.3 7.3 0 0 0-1.690-.980l-.380-2.650A.49.490 0 0 0 14 2h-4a.49.490 0 0 0-.490.420l-.380 2.650c-.610.250-1.170.590-1.690.980l-2.490-1a.5.5 0 0 0-.610.220l-2 3.460a.5.5 0 0 0 .12.640l2.110 1.650c-.040.320-.070.650-.070.980s.030.660.070.980l-2.110 1.650a.5.5 0 0 0-.12.640l2 3.460c.12.220.390.3.610.220l2.490-1c.52.4 1.080.730 1.690.980l.380 2.650c.030.240.240.420.490.420h4c.25 0 .46-.18.490-.42l.380-2.650c.61-.25 1.170-.590 1.690-.980l2.490 1c.23.090.49 0 .61-.220l2-3.460a.5.5 0 0 0-.12-.640l-2.110-1.650zM17.4 11.3c.04.310.05.520.05.7s-.02.4-.05.7l-.14 1.130.89.7 1.080.84-.7 1.210-1.270-.51-1.040-.42-.9.680c-.43.320-.84.560-1.250.73l-1.060.43-.16 1.130-.2 1.380h-1.4l-.19-1.350-.16-1.130-1.060-.43c-.43-.18-.83-.41-1.230-.71l-.91-.7-1.060.43-1.270.51-.7-1.210 1.080-.84.89-.7-.14-1.130c-.03-.31-.05-.54-.05-.74s.02-.43.050-.73l.14-1.130-.89-.7-1.080-.84.7-1.210 1.270.51 1.040.42.900-.68c.43-.32.840-.56 1.250-.73l1.060-.43.160-1.130.2-1.380h1.390l.19 1.350.16 1.130 1.060.43c.43.180.83.410 1.230.71l.91.7 1.060-.43 1.270-.51.7 1.210-1.070.85-.89.7.14 1.130z"></path><circle cx="12" cy="12" r="3.3" fill="#44464f"></circle></svg>
<svg style="left:2875px;top:332px" width="14" height="38" viewBox="0 0 14 38"><circle cx="7" cy="7.5" r="4" fill="#44464f"></circle><circle cx="7" cy="19" r="4" fill="#44464f"></circle><circle cx="7" cy="30.5" r="4" fill="#44464f"></circle></svg>
<svg style="left:2933px;top:337.5px" width="28" height="28" viewBox="0 0 28 28"><path d="M3 3l22 22M25 3L3 25" stroke="#44464f" stroke-width="3.8" fill="none"></path></svg>
<!-- styles pane -->
<div style="left:2281px;top:386px;width:711px;height:67px;background:#e6e8f2;border-bottom:2px solid #d5e0fb"></div>
<div style="left:2280px;top:386px;width:2px;height:1440px;background:#d3dffa"></div>
<div class="t dtab" style="left: 2306px; top: 403.5px; color: rgb(59, 91, 159); letter-spacing: -0.041px;">Styles</div>
<div style="left:2282px;top:449.5px;width:130px;height:4px;background:#5071b4"></div>
<div class="t dtab" style="left: 2436.6px; top: 404.5px; letter-spacing: 0.368px;">Computed</div>
<div class="t dtab" style="left: 2629.5px; top: 404.5px; letter-spacing: -0.116px;">Layout</div>
<svg style="left:2754px;top:404.5px" width="36" height="30" viewBox="0 0 36 30" fill="none" stroke="#5f6168" stroke-width="3.6"><path d="M4 3.5L15 15 4 26.5M19 3.5L30 15 19 26.5"></path></svg>
<div style="left:2282px;top:518.7px;width:710px;height:2px;background:#d0dcf7"></div>
<div style="left:2295.5px;top:464px;width:287px;height:45.5px;border:2px solid #b9bcc5;border-radius:9px;background:#fff"></div>
<div class="t" style="left: 2305px; top: 471px; font-size: 29.5px; line-height: 34px; color: rgb(138, 141, 149); letter-spacing: -0.113px;">Filter</div>
<div class="t mono" style="left:2602.5px;top:473px;font-size:27.4px;line-height:34px;font-weight:bold;color:#3f4147">:hov</div>
<div class="t mono" style="left:2694.5px;top:473px;font-size:27.4px;line-height:34px;font-weight:bold;color:#3f4147">.cls</div>
<svg style="left:2791px;top:470px" width="44" height="40" viewBox="0 0 44 40"><path d="M17.5 3v30M2.5 18h30" stroke="#44464f" stroke-width="3.8" fill="none"></path><path d="M39 28v11H28z" fill="#44464f"></path></svg>
<svg style="left:2861px;top:468px" width="34" height="40" viewBox="0 0 34 40" fill="none" stroke="#44464f" stroke-width="3.6"><path d="M9.7 3.6h20.6v19.4a2 2 0 0 1-2 2h-22.6a2 2 0 0 1-2-2v-13.4a6 6 0 0 1 6-6z" stroke-linejoin="round"></path><path d="M3.7 19.3h26.6"></path><path d="M17.6 3.6v5.5M25.1 3.6v9.5" stroke-width="3"></path><path d="M12 26.5h9.6v8a4.8 4.8 0 0 1-9.6 0z" fill="#44464f" stroke="none"></path></svg>
<svg style="left:2929px;top:469px" width="38" height="38" viewBox="0 0 38 38" fill="none" stroke="#44464f" stroke-width="3.8"><rect x="3" y="3" width="32" height="32" rx="3"></rect><path d="M25 3v32"></path><path d="M18.5 11.5v15l-9-7.5z" fill="#44464f" stroke="none"></path></svg>
<div id="sty"><div class="sl " style="top:524.5px;left:12.0px"><span class="gr">element.style</span> {</div><div class="sl " style="top:564.5px;left:56.4px"><span class="pr"><span class="pn">width</span>: 718.307px;</span></div><div class="sl " style="top:599.2px;left:56.4px"><span class="pr"><span class="pn">height</span>: 404px;</span></div><div class="sl " style="top:633.2px;left:12.0px">}</div><div class="sep" style="top:678px"></div><div class="sl " style="top:683.5px;left:12.0px"><span class="gr">.reveal .slide &gt;</span></div><div class="sl src" style="top:683.5px;right:5px">&lt;style&gt;</div><div class="sl " style="top:715.2px;left:12.0px"><span class="gr">img.stretch.quarto-figure-</span></div><div class="sl " style="top:747.1px;left:12.0px"><span class="gr">center,</span> .reveal .slide &gt; img.r-</div><div class="sl " style="top:779.1px;left:12.0px">stretch.quarto-figure-center {</div><div class="sl " style="top:815.9px;left:56.4px"><span class="pr"><span class="pn">display</span>: block;</span></div><div class="sl " style="top:851.0px;left:56.4px"><span class="pr"><span class="pn">margin-left</span>: auto;</span></div><div class="sl " style="top:887.0px;left:56.4px"><span class="pr"><span class="pn">margin-right</span>: auto;</span></div><div class="sl " style="top:919.9px;left:12.0px">}</div><div class="sep" style="top:965px"></div><div class="sl " style="top:970.2px;left:12.0px">.reveal .r-stretch<span class="gr">, .reveal</span></div><div class="sl src u" style="top:970.2px;right:5px">reveal.css:8</div><div class="sl " style="top:1001.8px;left:12.0px"><span class="gr">.stretch</span> {</div><div class="sl " style="top:1039.1px;left:56.4px"><span class="pr"><span class="pn">max-width</span>: none;</span></div><div class="sl " style="top:1074.5px;left:56.4px"><span class="pr"><span class="pn">max-height</span>: none;</span></div><div class="sl " style="top:1108.5px;left:12.0px">}</div><div class="sep" style="top:1152.5px"></div><div class="sl " style="top:1158.5px;left:12.0px">.reveal img {</div><div class="sl src u" style="top:1158.5px;right:5px">quarto.css:1</div><div class="sl " style="top:1198.5px;left:56.4px"><span class="pr"><span class="pn">margin</span>: <svg class="vt" width="18" height="20" viewBox="0 0 18 20"><path d="M2 1l14 9L2 19z" fill="#44464f"></path></svg>var(<span class="vr">--r-block-margin</span>) 0;</span></div><div class="sl " style="top:1231.5px;left:12.0px">}</div><div class="sep" style="top:1276px"></div><div class="sl " style="top:1282.5px;left:12.0px">.reveal img<span class="gr">, .reveal video,</span></div><div class="sl src u" style="top:1282.5px;right:5px">quarto.css:1</div><div class="sl " style="top:1314.2px;left:12.0px"><span class="gr">.reveal iframe</span> {</div><div class="sl " style="top:1351.2px;left:56.4px"><span class="pr st"><span class="pn">max-width</span>: 95%;</span></div><div class="sl " style="top:1386.0px;left:56.4px"><span class="pr st"><span class="pn">max-height</span>: 95%;</span></div><div class="sl " style="top:1419.9px;left:12.0px">}</div><div class="sep" style="top:1465px"></div><div class="sl " style="top:1471.0px;left:12.0px"><span class="gr">html, body, div, span,</span></div><div class="sl " style="top:1503.1px;left:12.0px"><span class="gr">applet, object, iframe, h1,</span></div><div class="sl " style="top:1535.2px;left:12.0px"><span class="gr">h2, h3, h4, h5, h6, p, blockquote, pre,</span></div><div class="sl " style="top:1567.3px;left:12.0px"><span class="gr">a, abbr, acronym, address, big, cite,</span></div><div class="sl " style="top:1599.4px;left:12.0px"><span class="gr">code, del, dfn, em, </span>img<span class="gr">, ins, kbd, q, s,</span></div><div class="sl " style="top:1631.5px;left:12.0px"><span class="gr">samp, small, strike, strong, sub, sup, tt,</span></div><div class="sl " style="top:1663.6px;left:12.0px"><span class="gr">var, b, u, i, center, dl, dt, dd, ol, ul,</span></div><div class="sl " style="top:1695.7px;left:12.0px"><span class="gr">li, fieldset, form, label, legend, table,</span></div><div class="sl " style="top:1727.8px;left:12.0px"><span class="gr">caption, tbody, tfoot, thead, tr, th, td,</span></div><div class="sl " style="top:1759.9px;left:12.0px"><span class="gr">article, aside, canvas, details, embed,</span></div><div class="sl " style="top:1792.0px;left:12.0px"><span class="gr">figure, figcaption, footer, header,</span></div><div class="sl src u" style="top:1471.0px;right:5px">reset.css:18</div></div>
<!-- breadcrumbs -->
<div style="left:1238px;top:1767px;width:1042px;height:59px;background:#fff;border-top:2px solid #d0dcf7"></div>
<div style="left:1737px;top:1769px;width:483.5px;height:57px;background:#d8e1fb"></div>
<div class="t" style="left: 1294px; top: 1782px; font-size: 30px; line-height: 34px; color: rgb(32, 33, 36); letter-spacing: 0.144px;"><span style="color:#8a1550">tion</span>#alt-text.slide.level2.present</div>
<div class="t" style="left: 1754.7px; top: 1782px; font-size: 30px; line-height: 34px; color: rgb(155, 74, 28); letter-spacing: 0.273px;"><span style="color:#8a1550">img</span>.r-stretch.quarto-figure-center</div>
<div style="left:1240px;top:1770px;width:59px;height:56px;background:#fff;border:2px solid #c3c6cf"></div>
<svg style="left:1261.5px;top:1788.5px" width="16" height="16" viewBox="0 0 16 16"><path d="M13.5 1v14L2 8z" fill="#1f1f1f"></path></svg>
<div style="left:2220px;top:1769.5px;width:59.5px;height:56.5px;background:#fff;border:2px solid #e1e2e5"></div>
<svg style="left:2243px;top:1788px" width="16" height="16" viewBox="0 0 16 16"><path d="M2.5 1v14L14 8z" fill="#8b8d92"></path></svg>
<div style="left:1238px;top:318px;width:1.3px;height:1508px;background:#d3defb"></div>

</div></div>


</body></html>
